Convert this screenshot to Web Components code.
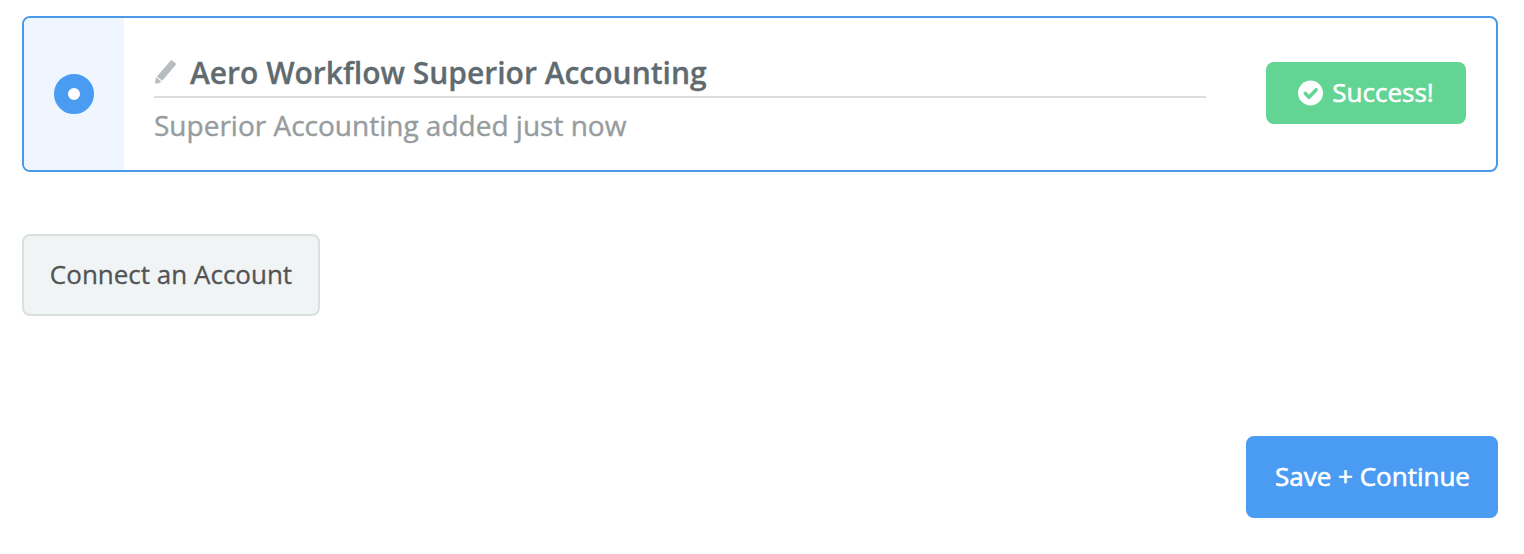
<!DOCTYPE html>
<html lang="en">
<head>
<meta charset="utf-8">
<title>Connected accounts</title>
<style>
body{margin:0;background:#fff;font-family:"Open Sans",sans-serif}
</style>
</head>
<body>
<account-page></account-page>
<script>
const define=(name,html)=>customElements.define(name,class extends HTMLElement{
  constructor(){super();this.attachShadow({mode:'open'}).innerHTML=html;}
});
define('radio-dot',`<style>
:host{display:block;box-sizing:border-box;width:40px;height:40px;border-radius:50%;border:14px solid #4a9bf2;background:#fff}
</style>`);
define('status-badge',`<style>
:host{display:flex;align-items:center;justify-content:center;box-sizing:border-box;width:200px;height:62px;border-radius:8px;background:#62d493;color:#fff;font-size:26px;line-height:36px;font-weight:400;gap:9px;-webkit-text-stroke:.6px}
svg{width:25px;height:26px;flex:none}
span{padding-bottom:2px}
</style><svg viewBox="0 0 25 26"><circle cx="12.5" cy="13" r="12.5" fill="#fff"/><path d="M7.2 13.3l3.8 3.9 7.2-7.4" fill="none" stroke="#62d493" stroke-width="3.4" stroke-linecap="round" stroke-linejoin="round"/></svg><span><slot></slot></span>`);
define('account-card',`<style>
:host{display:flex;box-sizing:border-box;height:156px;border:2px solid #4a9ae9;border-radius:8px;overflow:hidden;background:#fff}
.side{width:100px;background:#eff6ff;display:flex;align-items:center;justify-content:center;flex:none}
.body{flex:1;margin:36px 60px 0 30px;min-width:0}
.name{display:flex;align-items:center;box-sizing:border-box;height:44px;padding-bottom:4px;border-bottom:2px solid #d9dddd;color:#5f6b70;font-size:30px;font-weight:600;line-height:38px;white-space:nowrap;-webkit-text-stroke:.3px}
svg{width:22px;height:24px;margin:0 14px 2px 0;flex:none}
.sub{color:#979c9e;font-size:28px;line-height:38px;margin-top:8px;white-space:nowrap;-webkit-text-stroke:.4px}
.end{margin:44px 30px 0 0;flex:none}
</style>
<div class="side"><radio-dot></radio-dot></div>
<div class="body"><div class="name"><svg viewBox="0 0 22 24"><path fill="#b7bcbf" d="M1.1 23.6Q1 20.4 2.2 17.3L7.5 21.7Q4.4 23.6 1.1 23.6ZM2.9 16.4L16.6.8Q17.5-.1 18.5.7L21.4 3.1Q22.4 4 21.6 5L8.3 20.8Z"/></svg><span><slot name="name"></slot></span></div>
<div class="sub"><slot name="detail"></slot></div></div>
<div class="end"><slot name="status"></slot></div>`);
define('action-button',`<style>
:host{display:block}
button{display:block;box-sizing:border-box;height:82px;width:298px;padding:0 0 2px;border:2px solid #dadfe0;border-radius:8px;background:#f0f4f5;color:#525354;font:400 26px/36px "Open Sans",sans-serif;white-space:nowrap;-webkit-text-stroke:.3px}
:host([primary]) button{width:252px;border-color:#4a9bf2;background:#4a9bf2;color:#fff;-webkit-text-stroke:.6px;padding-left:1px}
</style><button type="button"><slot></slot></button>`);
define('account-page',`<style>
:host{display:flex;flex-direction:column;box-sizing:border-box;height:554px;padding:16px 26px 36px 22px}
.connect{margin-top:62px;align-self:flex-start}
.save{margin-top:auto;align-self:flex-end}
</style>
<account-card><span slot="name">Aero Workflow Superior Accounting</span><span slot="detail">Superior Accounting added just now</span><status-badge slot="status">Success!</status-badge></account-card>
<action-button class="connect">Connect an Account</action-button>
<action-button class="save" primary>Save + Continue</action-button>`);
</script>
</body>
</html>
